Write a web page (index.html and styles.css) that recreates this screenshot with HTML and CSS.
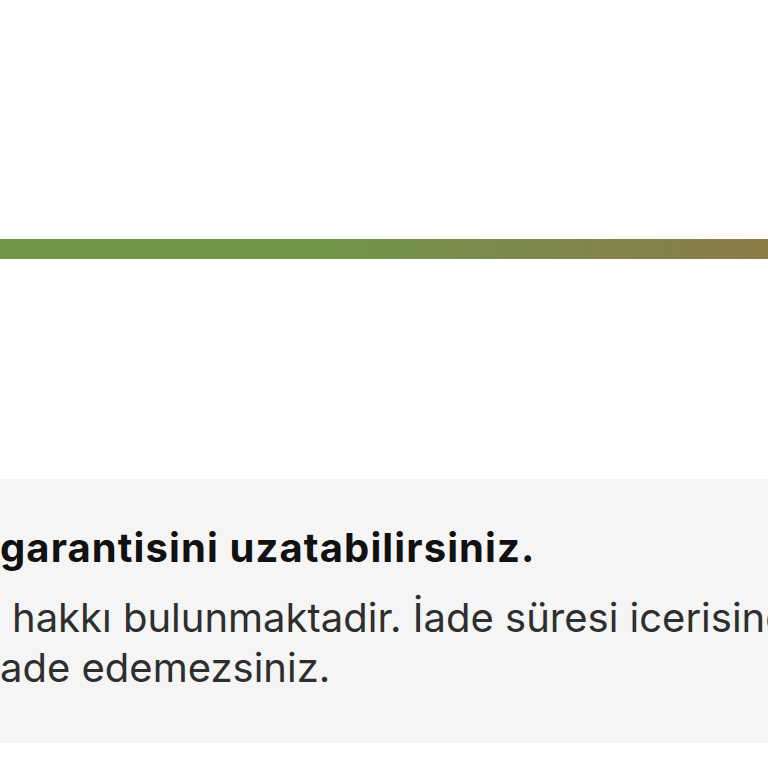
FILE: index.html
```html
<!DOCTYPE html>
<html lang="tr">
<head>
<meta charset="utf-8">
<link rel="stylesheet" href="styles.css">
</head>
<body>
<div class="top">
  <div class="bar"></div>
</div>
<section class="info">
  <h2 class="title">garantisini uzatabilirsiniz.</h2>
  <p class="line first">hakkı bulunmaktadir. İade süresi icerisinde</p>
  <p class="line">ade edemezsiniz.</p>
</section>
</body>
</html>
```
FILE: styles.css
```css
html, body {
  margin: 0;
  padding: 0;
  background: #ffffff;
  width: 768px;
  height: 768px;
  overflow: hidden;
}
body {
  font-family: Inter, "Noto Sans", sans-serif;
}
.top {
  height: 479px;
  padding-top: 239px;
  box-sizing: border-box;
}
.bar {
  height: 20px;
  background: linear-gradient(90deg, #6f9746 0%, #6f9746 40%, #7c8a4f 65%, #8a7a46 100%);
}
.info {
  background: #f5f5f5;
  height: 264px;
  padding-top: 47px;
  box-sizing: border-box;
  overflow: hidden;
}
.title {
  margin: 0;
  font-size: 40px;
  font-weight: 700;
  color: #111111;
  line-height: 44px;
  white-space: nowrap;
  letter-spacing: 1.1px;
}
.line {
  margin: 0;
  font-size: 40px;
  font-weight: 400;
  color: #2e2e2e;
  line-height: 50px;
  white-space: nowrap;
}
.first {
  padding-left: 12px;
  margin-top: 23px;
}
```
